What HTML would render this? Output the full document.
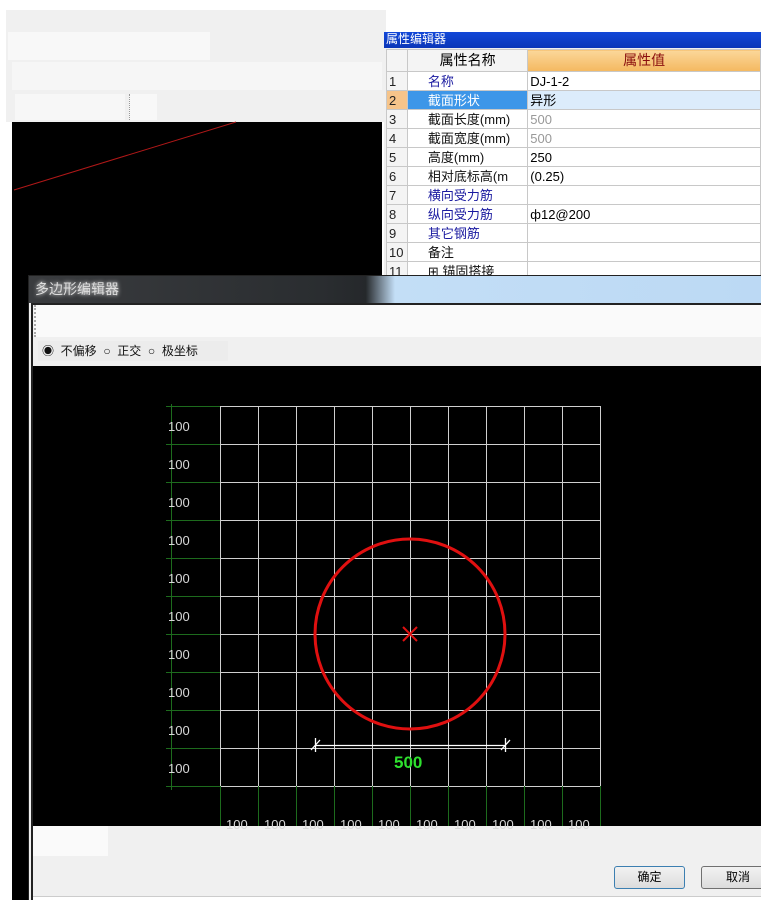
<!DOCTYPE html>
<html><head><meta charset="utf-8"><style>
*{margin:0;padding:0;box-sizing:border-box}
body{width:761px;height:915px;overflow:hidden;background:#fff;position:relative;font-family:"Liberation Sans","Noto Sans CJK SC",sans-serif;font-size:13px}
.a{position:absolute}
table{border-collapse:collapse;position:absolute;left:386px;top:49px;table-layout:fixed}
td{height:19px;border:1px solid #c8c8c8;font-size:13px;padding:0 2px;white-space:nowrap;overflow:hidden;background:#fff;line-height:17px}
td.n{background:#f4f4f4;color:#222;width:21px}
.bl{color:#1a1aa0;padding-left:20px}
.gr{color:#999}
.k{padding-left:20px;color:#111}
</style></head><body>
<div class="a" style="left:6px;top:10px;width:380px;height:112px;background:#f0f0f0"></div>
<div class="a" style="left:8px;top:32px;width:202px;height:28px;background:#f8f8f8"></div>
<div class="a" style="left:12px;top:62px;width:370px;height:28px;background:#f6f6f6"></div>
<div class="a" style="left:15px;top:94px;width:110px;height:26px;background:#f7f7f7"></div>
<div class="a" style="left:129px;top:94px;width:28px;height:26px;background:#f8f8f8;border-left:1px dotted #999"></div>
<div class="a" style="left:12px;top:122px;width:370px;height:160px;background:#000"></div>
<div class="a" style="left:12px;top:280px;width:18px;height:620px;background:#000"></div>
<svg class="a" style="left:0;top:0" width="761" height="300"><line x1="14" y1="190" x2="236" y2="122" stroke="#b01818" stroke-width="1"/></svg>
<div class="a" style="left:384px;top:32px;width:377px;height:16px;background:linear-gradient(#1248d8,#0a36b8);color:#fff;font-size:12px;line-height:15px;padding-left:2px">属性编辑器</div>
<div class="a" style="left:384px;top:48px;width:377px;height:228px;background:#f0f0f0"></div>
<table>
<tr><td class="n" style="height:22px"></td><td style="width:121px;text-align:center;background:#f4f4f4;font-size:14px">属性名称</td><td style="width:240px;text-align:center;background:linear-gradient(#fbd79a,#f4b860);color:#8a0e0e;font-size:14px">属性值</td></tr>
<tr><td class="n">1</td><td class="bl">名称</td><td>DJ-1-2</td></tr>
<tr><td class="n" style="background:#f6c48a">2</td><td class="bl" style="background:#3d96e8;color:#fff">截面形状</td><td style="background:#dcecfb">异形</td></tr>
<tr><td class="n">3</td><td class="k gr">截面长度(mm)</td><td class="gr">500</td></tr>
<tr><td class="n">4</td><td class="k gr">截面宽度(mm)</td><td class="gr">500</td></tr>
<tr><td class="n">5</td><td class="k">高度(mm)</td><td>250</td></tr>
<tr><td class="n">6</td><td class="k">相对底标高(m</td><td>(0.25)</td></tr>
<tr><td class="n">7</td><td class="bl">横向受力筋</td><td></td></tr>
<tr><td class="n">8</td><td class="bl">纵向受力筋</td><td>ф12@200</td></tr>
<tr><td class="n">9</td><td class="bl">其它钢筋</td><td></td></tr>
<tr><td class="n">10</td><td class="k">备注</td><td></td></tr>
<tr><td class="n">11</td><td class="k gr">⊞ 锚固搭接</td><td></td></tr>
</table>
<!-- dialog -->
<div class="a" style="left:28px;top:275px;width:733px;height:625px;background:#f0f0f0;border-top:1px solid #222;border-left:1px solid #222"></div>
<div class="a" style="left:29px;top:276px;width:732px;height:27px;background:linear-gradient(90deg,#3a3c3f 0%,#2a2d30 40%,#25282b 46%,#c3def6 50%,#bcd9f4 100%);color:#e8e8e8;font-size:14px;line-height:26px;padding-left:6px"><span style="color:#ddd;text-shadow:0 0 4px #fff">多边形编辑器</span></div>
<div class="a" style="left:31px;top:303px;width:2px;height:597px;background:#222"></div>
<div class="a" style="left:33px;top:303px;width:728px;height:2px;background:#222"></div>
<div class="a" style="left:34px;top:305px;width:727px;height:32px;background:#fafafa;border-left:2px dotted #aaa"></div>
<div class="a" style="left:38px;top:341px;width:190px;height:20px;background:#ececec;font-size:12px;line-height:20px;color:#111;padding-left:4px">◉&nbsp; 不偏移 &nbsp;○&nbsp; 正交 &nbsp;○&nbsp; 极坐标</div>
<div class="a" style="left:33px;top:366px;width:728px;height:460px;background:#000"></div>
<svg class="a" style="left:0;top:0" width="761" height="915">
<g stroke="#cfcfcf" stroke-width="1">
<path d="M220.5 406V786M258.5 406V786M296.5 406V786M334.5 406V786M372.5 406V786M410.5 406V786M448.5 406V786M486.5 406V786M524.5 406V786M562.5 406V786M600.5 406V786"/>
<path d="M220 406.5H601M220 444.5H601M220 482.5H601M220 520.5H601M220 558.5H601M220 596.5H601M220 634.5H601M220 672.5H601M220 710.5H601M220 748.5H601M220 786.5H601"/>
</g>
<g stroke="#1d6b1d" stroke-width="1">
<path d="M171.5 404V790"/>
<path d="M166 406.5H220M166 444.5H220M166 482.5H220M166 520.5H220M166 558.5H220M166 596.5H220M166 634.5H220M166 672.5H220M166 710.5H220M166 748.5H220M166 786.5H220"/>
<path d="M220.5 786V826M258.5 786V826M296.5 786V826M334.5 786V826M372.5 786V826M410.5 786V826M448.5 786V826M486.5 786V826M524.5 786V826M562.5 786V826M600.5 786V826"/>
</g>
<g fill="#d8d8d8" font-family="Liberation Sans" font-size="13">
<text x="168" y="431">100</text><text x="168" y="469">100</text><text x="168" y="507">100</text><text x="168" y="545">100</text><text x="168" y="583">100</text><text x="168" y="621">100</text><text x="168" y="659">100</text><text x="168" y="697">100</text><text x="168" y="735">100</text><text x="168" y="773">100</text>
<text x="226" y="829">100</text><text x="264" y="829">100</text><text x="302" y="829">100</text><text x="340" y="829">100</text><text x="378" y="829">100</text><text x="416" y="829">100</text><text x="454" y="829">100</text><text x="492" y="829">100</text><text x="530" y="829">100</text><text x="568" y="829">100</text>
</g>
<circle cx="410" cy="634" r="95" fill="none" stroke="#e01010" stroke-width="3"/>
<path d="M403 627L417 641M417 627L403 641" stroke="#e01010" stroke-width="2"/>
<path d="M315 745.5H506M315.5 738V752M505.5 738V752M311 750L320 740M501 750L510 740" stroke="#fff" stroke-width="1.3"/>
<text x="394" y="768" fill="#2ee02e" font-family="Liberation Sans" font-size="17" font-weight="bold">500</text>
</svg>
<div class="a" style="left:33px;top:826px;width:75px;height:30px;background:#fafafa"></div>
<div class="a" style="left:614px;top:866px;width:71px;height:23px;border:1px solid #3c7fb1;border-radius:3px;background:linear-gradient(#f2f2f2,#dcdcdc);text-align:center;line-height:21px;font-size:12px">确定</div>
<div class="a" style="left:701px;top:866px;width:70px;height:23px;border:1px solid #707070;border-radius:3px;background:linear-gradient(#f2f2f2,#dcdcdc);padding-left:24px;line-height:21px;font-size:12px">取消</div>
<div class="a" style="left:33px;top:896px;width:728px;height:19px;background:#fff;border-top:1px solid #ccc"></div>
</body></html>
